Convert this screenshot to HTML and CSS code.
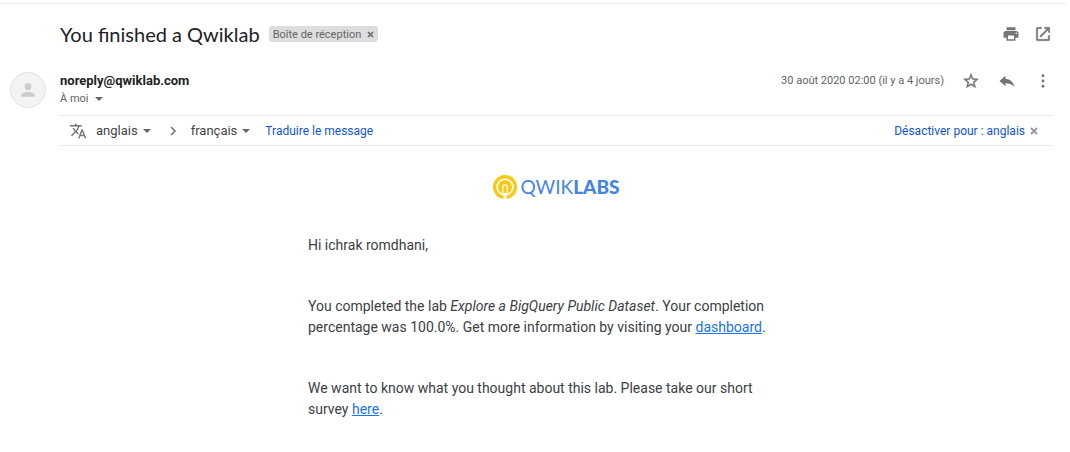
FILE: index.html
```html
<!DOCTYPE html>
<html lang="fr">
<head>
<meta charset="utf-8">
<meta name="viewport" content="width=device-width, initial-scale=1">
<title>You finished a Qwiklab</title>
<link rel="stylesheet" href="styles.css">
</head>
<body>
<main class="mail">
  <header class="subject">
    <h1 class="subject-title">You finished a Qwiklab</h1>
    <span class="label">Boîte de réception
      <button class="label-close" type="button" aria-label="Retirer le libellé"><svg width="7" height="7" viewBox="0 0 7 7"><path d="M1 1l5 5M6 1L1 6" stroke="currentColor" stroke-width="1.6"/></svg></button>
    </span>
    <div class="subject-actions">
      <button class="icon" type="button" aria-label="Imprimer"><svg width="18" height="18" viewBox="0 0 24 24"><path d="M19 8H5c-1.660 0-3 1.340-3 3v6h4v4h12v-4h4v-6c0-1.660-1.340-3-3-3zm-3 11H8v-5h8v5zm3-7c-.55 0-1-.45-1-1s.45-1 1-1 1 .45 1 1-.45 1-1 1zM18 3H6v4h12V3z"/></svg></button>
      <button class="icon" type="button" aria-label="Ouvrir dans une nouvelle fenêtre"><svg width="18" height="18" viewBox="0 0 24 24"><path d="M19 19H5V5h5V3H5a2 2 0 0 0-2 2v14a2 2 0 0 0 2 2h14a2 2 0 0 0 2-2v-5h-2v5zM14 3v2h3.600l-9.800 9.800 1.400 1.400L19 6.400V10h2V3h-7z" stroke="currentColor" stroke-width=".6"/></svg></button>
    </div>
  </header>

  <section class="sender">
    <div class="avatar"><svg width="20" height="20" viewBox="0 0 24 24" aria-hidden="true"><circle cx="12" cy="8" r="4"/><path d="M12 14c-2.700 0-8 1.300-8 4v2h16v-2c0-2.700-5.300-4-8-4z"/></svg></div>
    <div class="sender-info">
      <strong class="sender-name">noreply@qwiklab.com</strong>
      <button class="recipient" type="button">À moi <span class="caret"></span></button>
    </div>
    <time class="date" datetime="2020-08-30T02:00">30 août 2020 02:00 (il y a 4 jours)</time>
    <div class="sender-actions">
      <button class="icon" type="button" aria-label="Suivre"><svg width="18" height="18" viewBox="0 0 24 24"><path d="M22 9.240l-7.190-.62L12 2 9.190 8.630 2 9.240l5.460 4.730L5.820 21 12 17.270 18.180 21l-1.630-7.030L22 9.240zM12 15.400l-3.760 2.270 1-4.280-3.320-2.880 4.380-.38L12 6.100l1.710 4.040 4.380.38-3.320 2.880 1 4.280L12 15.400z" stroke="currentColor" stroke-width=".6"/></svg></button>
      <button class="icon" type="button" aria-label="Répondre"><svg width="18" height="18" viewBox="0 0 24 24"><path d="M10 9V5l-8 7 8 7v-4.100c5 0 9 1.600 12 5.100-1-5-4-10-12-11z"/></svg></button>
      <button class="icon" type="button" aria-label="Plus"><svg width="18" height="18" viewBox="0 0 24 24"><circle cx="12" cy="5" r="1.900"/><circle cx="12" cy="12" r="1.900"/><circle cx="12" cy="19" r="1.900"/></svg></button>
    </div>
  </section>

  <section class="translate">
    <svg class="translate-icon" width="18" height="18" viewBox="0 0 24 24" aria-hidden="true"><path d="M12.870 15.070l-2.540-2.510.03-.03A17.500 17.500 0 0 0 14.070 6H17V4h-7V2H8v2H1v2h11.170C11.500 7.920 10.440 9.750 9 11.350 8.070 10.320 7.300 9.190 6.690 8h-2c.73 1.630 1.730 3.170 2.980 4.560l-5.090 5.020L4 19l5-5 3.110 3.110.76-2.040zM18.500 10h-2L12 22h2l1.120-3h4.750L21 22h2l-4.500-12zm-2.620 7l1.620-4.330L19.120 17h-3.240z"/></svg>
    <button class="lang lang-from" type="button">anglais <span class="caret"></span></button>
    <svg class="chevron" width="8" height="10" viewBox="0 0 8 10" aria-hidden="true"><path d="M2 1l4 4-4 4" fill="none" stroke="currentColor" stroke-width="1.600"/></svg>
    <button class="lang" type="button">français <span class="caret"></span></button>
    <a class="action" href="#">Traduire le message</a>
    <a class="action action-off" href="#">Désactiver pour : anglais</a>
    <button class="dismiss" type="button" aria-label="Fermer"><svg width="8" height="8" viewBox="0 0 8 8"><path d="M1 1l6 6M7 1L1 7" stroke="currentColor" stroke-width="2"/></svg></button>
  </section>

  <div class="message-area">
    <article class="message" lang="en">
      <div class="brand">
        <svg width="24" height="26" viewBox="0 0 24 26" fill="none" aria-hidden="true"><path d="M10.500 23.200A10.300 10.300 0 1 1 13.500 23.200" stroke="#f5cb15" stroke-width="3.400"/><circle cx="12" cy="13" r="7" fill="#f5cb15"/><path d="M9.800 20.500v-7.500a2.200 2.200 0 0 1 4.400 0v7.500" stroke="#fff" stroke-width="1.200"/><path d="M11 19h2v6h-2z" fill="#fff"/></svg>
        <span class="brand-name">QWIK<b>LABS</b></span>
      </div>
      <p>Hi ichrak romdhani,</p>
      <p>You completed the lab <em>Explore a BigQuery Public Dataset</em>. Your completion percentage was 100.0%. Get more information by visiting your <a href="#">dashboard</a>.</p>
      <p>We want to know what you thought about this lab. Please take our short survey <a href="#">here</a>.</p>
    </article>
  </div>
</main>
</body>
</html>
```
FILE: styles.css
```css
* { box-sizing: border-box; }

body {
  margin: 0;
  background: #fff;
  color: #222;
  font-family: Roboto, "Liberation Sans", sans-serif;
}

button {
  display: inline-flex;
  align-items: center;
  padding: 0;
  border: 0;
  background: none;
  color: inherit;
  font: inherit;
  cursor: pointer;
}

svg { display: block; }

a { text-decoration: none; }

.mail {
  margin: 3px 4px 0 0;
  padding: 0 14px 24px 10px;
  border-top: 1px solid #ececec;
}

.subject {
  display: flex;
  align-items: center;
  height: 60px;
  padding-left: 50px;
}

.subject-title {
  margin: 0;
  color: #202124;
  font: 400 20px/28px Lato, "Open Sans", sans-serif;
}

.label {
  display: flex;
  align-items: center;
  gap: 6px;
  height: 16px;
  margin-left: 9px;
  padding: 0 4px;
  border-radius: 3px;
  background: #ddd;
  color: #666;
  font-size: 11px;
}

.subject-actions,
.sender-actions {
  display: flex;
}

.subject-actions {
  gap: 14px;
  margin-left: auto;
}

.icon { color: #757575; }

.icon svg,
.translate-icon { fill: currentColor; }

.sender {
  display: flex;
  align-items: flex-start;
  padding-top: 8px;
}

.avatar {
  display: grid;
  place-items: center;
  width: 36px;
  height: 36px;
  margin-right: 14px;
  border: 1px solid #e2e2e2;
  border-radius: 50%;
  background: #f3f3f3;
}

.avatar svg { fill: #ccc; }

.sender-info {
  display: flex;
  flex-direction: column;
  align-items: flex-start;
}

.sender-name {
  font-size: 13px;
  line-height: 18px;
}

.recipient {
  gap: 6px;
  color: #5f6368;
  font-size: 11px;
  line-height: 18px;
}

.caret {
  border: 4px solid transparent;
  border-top-color: #666;
  border-bottom: 0;
}

.date {
  margin-left: auto;
  color: #5f6368;
  font-size: 11px;
  line-height: 18px;
}

.sender-actions {
  gap: 18px;
  margin-left: 18px;
}

.translate {
  display: flex;
  align-items: center;
  height: 31px;
  margin: 7px 0 0 50px;
  padding: 0 14px 0 9px;
  border: solid #ececec;
  border-width: 1px 0;
  font-size: 12px;
}

.translate-icon { color: #757575; }

.lang {
  gap: 5px;
  color: #444;
  font-size: 13px;
}

.lang-from { margin-left: 9px; }

.chevron {
  margin: 0 14px 0 18px;
  color: #757575;
}

.action {
  margin-left: 15px;
  color: #15c;
}

.action-off { margin-left: auto; }

.dismiss {
  margin-left: 5px;
  color: #999;
}

.message-area { padding: 28px 0 0 50px; }

.message {
  max-width: 496px;
  margin: 0 auto;
  color: #3c4043;
  font-size: 14px;
  line-height: 21px;
}

.brand {
  display: flex;
  align-items: center;
  justify-content: center;
  gap: 4px;
  margin-bottom: 35px;
}

.brand-name {
  color: #4285e4;
  font: 400 19px/24px Lato, sans-serif;
}

.brand-name b { font-weight: 900; }

.message p {
  max-width: 472px;
  margin: 0 0 40px;
}

.message p:last-child { margin-bottom: 0; }

.message a {
  color: #1a73e8;
  text-decoration: underline;
}
```
